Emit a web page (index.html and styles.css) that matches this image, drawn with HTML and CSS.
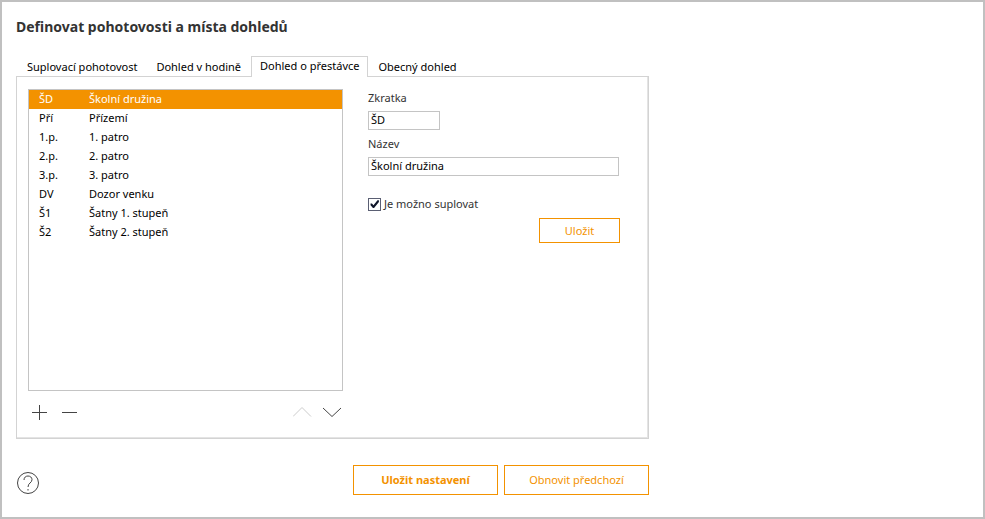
FILE: index.html
```html
<!DOCTYPE html>
<html lang="cs">
<head>
  <meta charset="UTF-8">
  <meta name="viewport" content="width=device-width, initial-scale=1.0">
  <title>Definovat pohotovosti a místa dohledů</title>
  <link rel="stylesheet" href="styles.css">
</head>
<body>
  <main class="container">
    <h1>Definovat pohotovosti a místa dohledů</h1>

    <div class="tabs" role="tablist">
      <button type="button" class="tab" role="tab">Suplovací pohotovost</button>
      <button type="button" class="tab" role="tab">Dohled v hodině</button>
      <button type="button" class="tab active" role="tab" aria-selected="true">Dohled o přestávce</button>
      <button type="button" class="tab" role="tab">Obecný dohled</button>
    </div>

    <div class="panel">
      <div class="left">
        <div class="list">
          <table>
            <tr class="selected"><td class="code">ŠD</td><td>Školní družina</td></tr>
            <tr><td class="code">Pří</td><td>Přízemí</td></tr>
            <tr><td class="code">1.p.</td><td>1. patro</td></tr>
            <tr><td class="code">2.p.</td><td>2. patro</td></tr>
            <tr><td class="code">3.p.</td><td>3. patro</td></tr>
            <tr><td class="code">DV</td><td>Dozor venku</td></tr>
            <tr><td class="code">Š1</td><td>Šatny 1. stupeň</td></tr>
            <tr><td class="code">Š2</td><td>Šatny 2. stupeň</td></tr>
          </table>
        </div>
        <div class="tools">
          <button type="button" class="icon" aria-label="Přidat">
            <svg width="20" height="20" viewBox="0 0 20 20"><path d="M2 9.5H17M9.500 2V17"/></svg>
          </button>
          <button type="button" class="icon" aria-label="Odebrat">
            <svg width="20" height="20" viewBox="0 0 20 20"><path d="M2 9.5H17"/></svg>
          </button>
          <button type="button" class="icon up" aria-label="Nahoru" disabled>
            <svg width="20" height="20" viewBox="0 0 20 20"><path d="M0 13.500L9 4.500L18 13.500"/></svg>
          </button>
          <button type="button" class="icon" aria-label="Dolů">
            <svg width="20" height="20" viewBox="0 0 20 20"><path d="M0 5L9 13.500L18 5"/></svg>
          </button>
        </div>
      </div>

      <form class="detail">
        <label for="zkratka">Zkratka</label>
        <input type="text" id="zkratka" class="short" value="ŠD">

        <label for="nazev">Název</label>
        <input type="text" id="nazev" value="Školní družina">

        <div class="check">
          <input type="checkbox" id="suplovat" checked>
          <label for="suplovat">Je možno suplovat</label>
        </div>

        <button type="button" class="btn small">Uložit</button>
      </form>
    </div>

    <div class="footer">
      <button type="button" class="icon help" aria-label="Nápověda">
        <svg width="24" height="24" viewBox="0 0 24 24">
          <circle cx="12" cy="12" r="10.5"/>
          <path d="M8 9C8 6.500 9.700 5 12 5S16 6.500 16 8.700C16 11.800 12 12 12 16M12 18V19.500"/>
        </svg>
      </button>
      <button type="button" class="btn bold">Uložit nastavení</button>
      <button type="button" class="btn">Obnovit předchozí</button>
    </div>
  </main>
</body>
</html>
```
FILE: styles.css
```css
* {
  box-sizing: border-box;
}
body {
  margin: 0;
  min-height: 100vh;
  border: 2px solid #c0c0c0;
  background: #fff;
  color: #333;
  font-family: "Noto Sans", sans-serif;
  font-size: 11px;
  line-height: 18px;
}
button, input {
  font: inherit;
}
.container {
  max-width: 661px;
  padding: 14px;
}
h1 {
  margin: 0 0 18px;
  font-size: 14px;
  line-height: 22px;
}
.tabs {
  display: flex;
  align-items: flex-end;
  gap: 1px;
  padding-left: 2px;
}
.tab {
  height: 20px;
  padding: 0 8px;
  border: 1px solid transparent;
  border-bottom: none;
  background: none;
  color: #000;
  line-height: 18px;
  white-space: nowrap;
}
.tab.active {
  z-index: 1;
  height: 21px;
  margin-bottom: -1px;
  padding-bottom: 2px;
  border-color: #d3d3d3;
  background: #fff;
}
.panel {
  display: flex;
  gap: 25px;
  padding: 12px 28px 15px 11px;
  border: 1px solid #d3d3d3;
  box-shadow: inset -1px -1px 0 #e4e4e4;
}
.left {
  flex: 0 1 315px;
}
.list {
  min-height: 302px;
  border: 1px solid #c4c4c4;
  color: #000;
}
table {
  width: 100%;
  border-collapse: collapse;
  line-height: 17px;
}
td {
  height: 19px;
  padding: 0 0 2px;
}
.code {
  width: 60px;
  padding-left: 10px;
}
.selected {
  background: #f39200;
  color: #fff;
}
.tools {
  display: flex;
  gap: 10px;
  margin-top: 12px;
  padding-left: 2px;
}
.icon {
  display: flex;
  padding: 0;
  border: none;
  background: none;
}
.icon svg {
  fill: none;
  stroke: #444;
  stroke-width: 1;
}
.icon:disabled svg {
  stroke: #ccc;
}
.icon.up {
  margin-left: auto;
}
.detail {
  flex: 1;
  display: flex;
  flex-direction: column;
}
.detail input[type="text"] {
  width: 251px;
  max-width: 100%;
  height: 19px;
  margin: 4px 0 5px;
  padding: 0 2px 2px;
  border: 1px solid #c4c4c4;
  border-radius: 0;
  color: #000;
}
.detail input.short {
  width: 72px;
}
.check {
  display: flex;
  align-items: center;
  gap: 3px;
  margin: 14px 0 5px;
}
.check input {
  appearance: none;
  width: 13px;
  height: 13px;
  margin: 0;
  border: 1px solid #5a5f73;
  background: #fff;
}
.check input:checked::before {
  content: "";
  display: block;
  height: 11px;
  background: #10162a;
  clip-path: polygon(14% 45%, 27% 45%, 41% 62%, 77% 16%, 90% 16%, 90% 32%, 46% 87%, 36% 87%, 14% 62%);
}
.btn {
  width: 145px;
  height: 30px;
  padding: 0;
  border: 1px solid #f39200;
  background: #fff;
  color: #f39200;
}
.btn.small {
  align-self: flex-end;
  width: 81px;
  height: 25px;
}
.btn.bold {
  font-weight: bold;
}
.footer {
  display: flex;
  align-items: flex-end;
  gap: 6px;
  margin-top: 26px;
}
.help {
  margin-right: auto;
}
```
